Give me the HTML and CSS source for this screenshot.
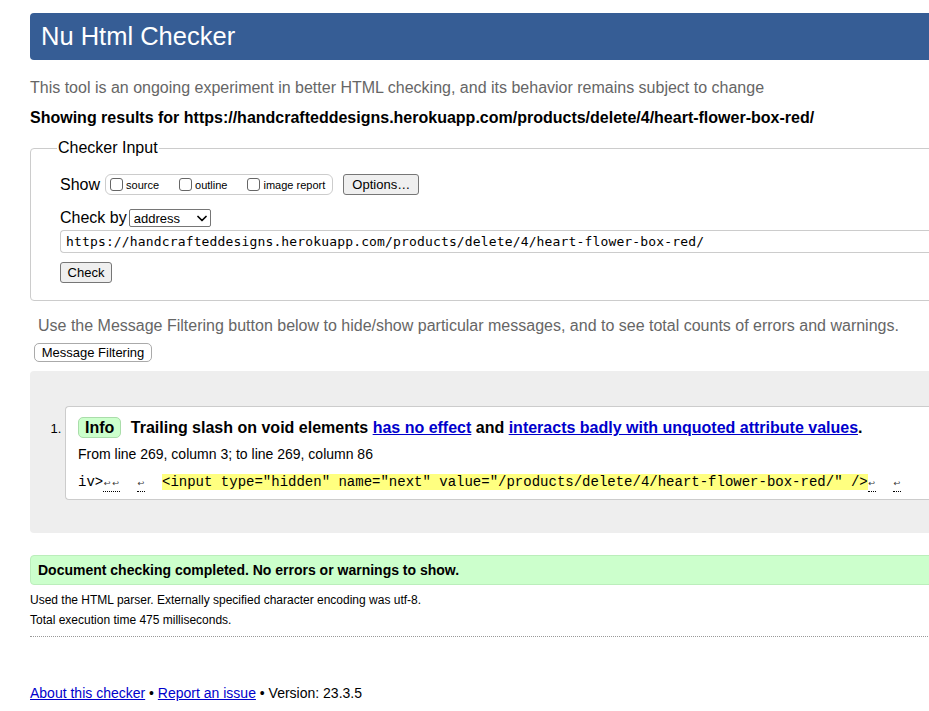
FILE: index.html
```html
<!DOCTYPE html>
<html>
<head>
<meta charset="utf-8">
<title>Nu Html Checker</title>
<link rel="stylesheet" href="styles.css">
</head>
<body>
<div class="page">
  <h1 class="masthead">Nu Html Checker</h1>
  <p class="intro">This tool is an ongoing experiment in better HTML checking, and its behavior remains subject to change</p>
  <p class="showing">Showing results for https://handcrafteddesigns.herokuapp.com/products/delete/4/heart-flower-box-red/</p>

  <fieldset class="checker">
    <legend>Checker Input</legend>
    <div class="row show-row">
      <span class="lbl">Show</span>
      <span class="opts">
        <label><input type="checkbox">source</label>
        <label><input type="checkbox">outline</label>
        <label><input type="checkbox">image report</label>
      </span>
      <button class="btn options">Options…</button>
    </div>
    <div class="row by-row">
      <span class="lbl">Check by</span>
      <span class="select">address<svg width="10" height="7" viewBox="0 0 10 7"><path d="M1 1.5 L5 5.5 L9 1.5" fill="none" stroke="#000" stroke-width="1.7" stroke-linecap="round" stroke-linejoin="round"/></svg></span>
    </div>
    <div class="url">https://handcrafteddesigns.herokuapp.com/products/delete/4/heart-flower-box-red/</div>
    <button class="btn check">Check</button>
  </fieldset>

  <p class="filter-note">Use the Message Filtering button below to hide/show particular messages, and to see total counts of errors and warnings.</p>
  <button class="btn filter">Message Filtering</button>

  <div class="results">
    <ol class="msgs">
      <li class="msg">
        <p class="msg-title"><span class="badge">Info</span> Trailing slash on void elements <a href="#">has no effect</a> and <a href="#">interacts badly with unquoted attribute values</a>.</p>
        <p class="loc">From line 269, column 3; to line 269, column 86</p>
        <p class="extract"><code>iv&gt;<span class="lf"><i>↩&#xFE0E;</i><i>↩&#xFE0E;</i></span>  <span class="lf"><i>↩&#xFE0E;</i></span>  <mark>&lt;input type="hidden" name="next" value="/products/delete/4/heart-flower-box-red/" /&gt;</mark><span class="lf"><i>↩&#xFE0E;</i></span>  <span class="lf"><i>↩&#xFE0E;</i></span></code></p>
      </li>
    </ol>
  </div>

  <p class="success">Document checking completed. No errors or warnings to show.</p>
  <p class="meta first">Used the HTML parser. Externally specified character encoding was utf-8.</p>
  <p class="meta">Total execution time 475 milliseconds.</p>
  <hr class="dots">

  <p class="footer"><a href="#">About this checker</a> • <a href="#">Report an issue</a> • Version: 23.3.5</p>
</div>
</body>
</html>
```

FILE: styles.css
```css
html { overflow: hidden; }
body {
  margin: 0;
  background: #fff;
  font-family: "Liberation Sans", Arial, sans-serif;
  color: #000;
}
.page {
  width: 1000px;
  padding: 13px 0 0 30px;
}
p { margin: 0; }
.masthead {
  margin: 0;
  height: 47px;
  box-sizing: border-box;
  background: #365d95;
  color: #fff;
  font-weight: normal;
  font-size: 25.5px;
  line-height: 47px;
  padding-left: 11px;
  border-radius: 4px 0 0 4px;
}
.intro {
  margin-top: 18px;
  font-size: 16px;
  color: #666;
  line-height: 20px;
}
.showing {
  margin-top: 10px;
  font-size: 16px;
  font-weight: bold;
  line-height: 20px;
}
.checker {
  margin: 11px 0 0 0;
  border: 1px solid #ccc;
  border-radius: 4px 0 0 4px;
  padding: 4px 0 17px 29px;
}
.checker legend {
  font-size: 16px;
  padding: 0 1px;
  margin-left: -3px;
}
.row { display: flex; align-items: center; }
.lbl { font-size: 16px; }
.show-row { margin-top: 13px; }
.opts {
  display: inline-flex;
  align-items: center;
  border: 1px solid #ccc;
  border-radius: 6px;
  height: 19px;
  padding: 0 7px 0 4px;
  margin-left: 5px;
  font-size: 11px;
}
.opts label { display: inline-flex; align-items: center; margin-right: 20px; }
.opts label:last-child { margin-right: 0; }
.opts input {
  appearance: none;
  width: 13px; height: 13px;
  border: 1px solid #666;
  border-radius: 3px;
  margin: 0 3px 0 0;
  background: #fff;
}
.btn {
  font-family: "Liberation Sans", Arial, sans-serif;
  font-size: 13px;
  background: #efefef;
  border: 1px solid #767676;
  border-radius: 3px;
  color: #000;
  padding: 0 6px;
  height: 21px;
}
.options { margin-left: 10px; width: 76px; }
.by-row { margin-top: 14px; }
.select {
  display: inline-flex;
  align-items: center;
  justify-content: space-between;
  box-sizing: border-box;
  width: 82px;
  height: 18px;
  border: 1px solid #767676;
  border-radius: 2px;
  margin-left: 2px;
  padding: 0 3px 0 4px;
  font-size: 13px;
}
.url {
  margin-top: 3px;
  height: 23px;
  box-sizing: border-box;
  border: 1px solid #ccc;
  border-right: none;
  border-radius: 4px 0 0 4px;
  padding-left: 5px;
  font-family: "DejaVu Sans Mono", monospace;
  font-size: 13px;
  line-height: 21px;
  letter-spacing: 0.15px;
}
.check { margin-top: 9px; width: 52px; }
.filter-note {
  margin-top: 15px;
  padding-left: 8px;
  font-size: 16px;
  line-height: 20px;
  color: #666;
}
.filter {
  margin: 7px 0 0 4px;
  background: #fff;
  border: 1px solid #aaa;
  border-radius: 5px;
  height: 19px;
  width: 118px;
  padding: 0;
}
.results {
  margin-top: 9px;
  background: #eee;
  height: 162px;
  border-radius: 4px 0 0 4px;
  padding-top: 35px;
  box-sizing: border-box;
}
.msgs { margin: 0; padding: 0 0 0 35px; font-size: 14px; }
.msg {
  background: #fff;
  border: 1px solid #ccc;
  border-right: none;
  border-radius: 4px 0 0 4px;
  padding: 10px 0 7px 12px;
  height: 94px;
  box-sizing: border-box;
}
.msg::marker { font-size: 13px; }
.msg-title {
  font-size: 16px;
  font-weight: bold;
  line-height: 22px;
}
.msg-title a { color: #00c; }
.badge {
  display: inline-block;
  background: #ccffcc;
  border: 1px solid #aaddaa;
  border-radius: 5px;
  padding: 0 6px;
  line-height: 19px;
  margin-right: 5px;
}
.loc { margin-top: 7px; font-size: 14px; line-height: 17px; }
.extract {
  margin-top: 11px;
  font-family: "Liberation Mono", monospace;
  font-size: 14px;
  line-height: 17px;
}
.extract code { font-family: inherit; white-space: pre; }
.lf {
  border-bottom: 1px dotted #000;
  padding-bottom: 1px;
}
.lf i {
  display: inline-block;
  width: 8.4px;
  font-style: normal;
  font-family: "DejaVu Sans", sans-serif;
  font-size: 8px;
  text-align: center;
  color: #333;
}
mark { background: #ffff80; color: #000; }
.success {
  margin-top: 22px;
  background: #ccffcc;
  border: 1px solid #bbeebb;
  border-radius: 4px 0 0 4px;
  height: 30px;
  box-sizing: border-box;
  line-height: 28px;
  padding-left: 7px;
  font-size: 14px;
  font-weight: bold;
}
.meta {
  font-size: 12px;
  line-height: 20px;
}
.meta.first { margin-top: 5px; }
.dots {
  margin: 6px 0 0 0;
  border: none;
  border-top: 1px dotted #999;
  height: 0;
}
.footer {
  margin-top: 47px;
  font-size: 14px;
  line-height: 18px;
}
.footer a { color: #00c; }
```
